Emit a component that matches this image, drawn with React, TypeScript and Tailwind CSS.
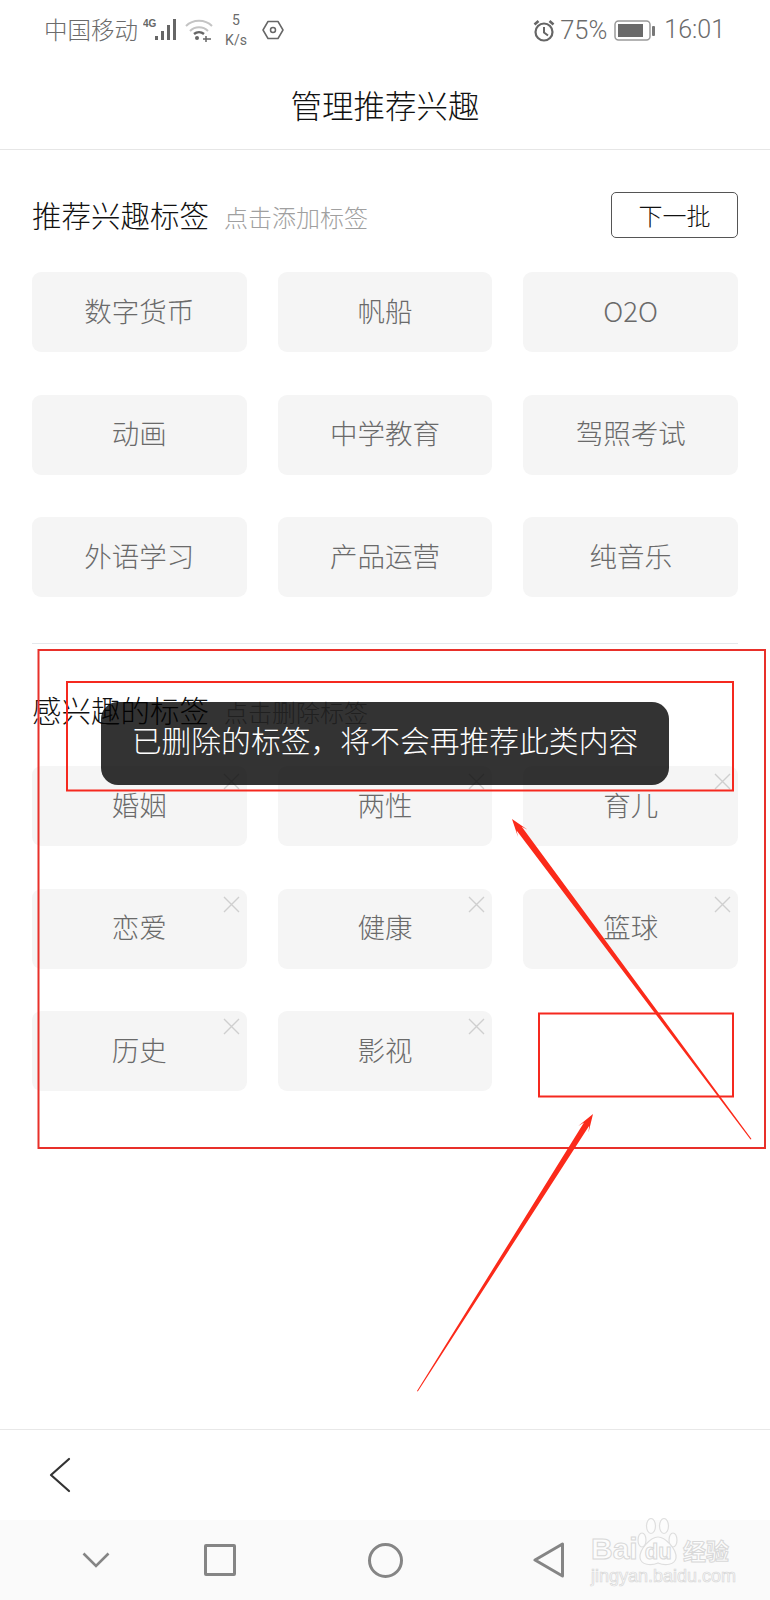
const font = '[font-family:"Noto_Sans_CJK_SC","Noto_Sans",sans-serif]';

function Tile({ label, removable }: { label: string; removable?: boolean }) {
  return (
    <div className="relative flex h-[80px] items-center justify-center rounded-[9px] bg-[#f5f5f5] pb-[3px] text-[27.500px] font-light text-[#6a6a6a]">
      {label}
      {removable && (
        <svg className="absolute right-[7px] top-[7px]" width="17" height="17" viewBox="0 0 17 17" fill="none" stroke="#cfcfcf" strokeWidth="1.4">
          <path d="M1 1l15 15M16 1L1 16" />
        </svg>
      )}
    </div>
  );
}

function SectionHead({ title, hint, action }: { title: string; hint: string; action?: boolean }) {
  return (
    <div className="flex h-[46px] items-center">
      <span className="pb-[2px] text-[29.500px] font-light text-[#111]">{title}</span>
      <span className="ml-[15px] mt-[3px] text-[24px] font-light text-[#a0a0a0]">{hint}</span>
      {action && (
        <div className="ml-auto flex h-[46px] w-[127px] items-center justify-center rounded-[5px] border border-[#555] text-[24px] font-light text-[#111]">
          下一批
        </div>
      )}
    </div>
  );
}

function StatusBar() {
  return (
    <div className="flex h-[60px] items-center pl-[44px] pr-[45px] text-[#6b6b6b]">
      <span className="text-[23.500px] font-light">中国移动</span>
      <svg className="ml-[5px] mb-[1px]" width="38" height="24" viewBox="0 0 38 24" fill="#666">
        <text x="0" y="9" fontSize="10" fontWeight="700" fontFamily="Liberation Sans">4G</text>
        <rect x="12" y="18" width="3" height="4" />
        <rect x="18" y="13" width="3" height="9" />
        <rect x="24" y="7" width="3" height="15" />
        <rect x="30" y="1" width="3" height="21" />
      </svg>
      <svg className="ml-[4px]" width="28" height="24" viewBox="0 0 28 24" fill="none">
        <path d="M1 8c7-7 19-7 26 0" stroke="#c4c4c4" strokeWidth="2" />
        <path d="M5 13c5-5 13-5 18 0" stroke="#c4c4c4" strokeWidth="2" />
        <path d="M9 16c3-2.500 7-2.500 10 0" stroke="#666" strokeWidth="2.400" />
        <circle cx="12" cy="20" r="2" fill="#666" />
        <path d="M18 21h8M21 18v6" stroke="#666" strokeWidth="1.500" />
      </svg>
      <div className="ml-[10px] flex w-[26px] flex-col items-center text-[14px] leading-[20px] [font-family:'Roboto',sans-serif]">
        <span>5</span>
        <span>K/s</span>
      </div>
      <svg className="ml-[13px]" width="22" height="20" viewBox="0 0 22 20" fill="none" stroke="#666" strokeWidth="1.500">
        <path d="M6 1.500h10l5 8.500-5 8.500H6L1 10z" strokeLinejoin="round" />
        <circle cx="11" cy="10" r="2.500" />
      </svg>
      <svg className="ml-auto" width="22" height="23" viewBox="0 0 22 23" fill="none" stroke="#666" strokeWidth="2.200">
        <circle cx="11" cy="13" r="8.500" />
        <path d="M11 8v5.500l4 3" strokeWidth="2" />
        <path d="M1.500 5.500L5.500 2M20.500 5.500L16.500 2" strokeWidth="2.600" />
      </svg>
      <span className="ml-[5px] text-[25.500px] font-light [font-family:'Roboto',sans-serif]">75%</span>
      <svg className="ml-[7px]" width="42" height="21" viewBox="0 0 42 21" fill="none">
        <rect x="1" y="1" width="35" height="19" rx="3.500" stroke="#9a9a9a" strokeWidth="1.500" />
        <rect x="4" y="4" width="25" height="13" fill="#6a6a6a" />
        <rect x="38" y="6" width="3" height="10" rx="1" fill="#777" />
      </svg>
      <span className="ml-[8px] text-[25px] font-light [font-family:'Roboto',sans-serif]">16:01</span>
    </div>
  );
}

function Watermark() {
  return (
    <div className="absolute left-[591px] top-[1517px] flex h-[68px] w-[138px] flex-col">
      <svg className="absolute left-[44px] top-0" width="46" height="50" viewBox="0 0 46 50" fill="#fcfcfc" stroke="#dedede" strokeWidth="1.200">
        <ellipse cx="7" cy="23" rx="4" ry="7" />
        <ellipse cx="16" cy="9" rx="4.500" ry="7.500" />
        <ellipse cx="29" cy="9" rx="4.500" ry="7.500" />
        <ellipse cx="38" cy="23" rx="4" ry="7" />
        <path d="M23 20c7 0 19 12 18 21-1 7-11 8-18 5-7 3-17 2-18-5-1-9 11-21 18-21z" />
      </svg>
      <div className="relative mt-[18px] flex h-[28px] w-full items-center text-[30px] font-bold leading-none text-[#fcfcfc] [-webkit-text-stroke:1px_#d8d8d8] [font-family:'Liberation_Sans',sans-serif]">
        <span>Bai</span>
        <span className="ml-[7px] mt-[5px] text-[22px]">du</span>
        <span className="ml-auto mt-[3px] text-[23px] [font-family:'Noto_Sans_CJK_SC',sans-serif]">经验</span>
      </div>
      <span className="relative mt-[4px] w-full text-[18px] leading-[18px] text-[#fafafa] [-webkit-text-stroke:0.7px_#d8d8d8] [font-family:'Liberation_Sans',sans-serif]">
        jingyan.baidu.com
      </span>
    </div>
  );
}

function Annotations() {
  return (
    <svg className="pointer-events-none absolute left-0 top-0" width="770" height="1600" viewBox="0 0 770 1600" fill="none">
      <rect x="38.500" y="650" width="726.500" height="498" stroke="#e8302a" strokeWidth="2" />
      <rect x="67" y="682" width="666" height="108.500" stroke="#f5291f" strokeWidth="2" />
      <rect x="539" y="1013.500" width="194" height="83" stroke="#f5291f" strokeWidth="2" />
      <polygon points="512,819 527.600,829.800 521.800,826.700 751.500,1139 750.500,1139.500 516.600,830.500 518,837" fill="#fb2a1a" />
      <polygon points="593,1114 588.500,1132.400 589.200,1125.700 417.800,1391.500 417,1391 584,1122.500 578.300,1126" fill="#fb2a1a" />
    </svg>
  );
}

export default function App() {
  return (
    <div className={`relative flex h-[1600px] w-[770px] flex-col overflow-hidden bg-white ${font}`}>
      <StatusBar />
      <div className="flex h-[90px] items-center justify-center border-b border-[#e6e6e6] text-[31.500px] font-light text-[#111]">
        管理推荐兴趣
      </div>
      <div className="px-[32px] pt-[42px]">
        <SectionHead title="推荐兴趣标签" hint="点击添加标签" action />
        <div className="mt-[34px] grid grid-cols-3 gap-x-[31px] gap-y-[42.500px]">
          {["数字货币", "帆船", "O2O", "动画", "中学教育", "驾照考试", "外语学习", "产品运营", "纯音乐"].map((t) => (
            <Tile key={t} label={t} />
          ))}
        </div>
        <div className="mt-[46px] h-px bg-[#e4e8ec]" />
        <div className="pt-[43px]">
          <SectionHead title="感兴趣的标签" hint="点击删除标签" />
        </div>
        <div className="mt-[33px] grid grid-cols-3 gap-x-[31px] gap-y-[42.500px]">
          {["婚姻", "两性", "育儿", "恋爱", "健康", "篮球", "历史", "影视"].map((t) => (
            <Tile key={t} label={t} removable />
          ))}
        </div>
      </div>
      <div className="mt-auto flex h-[91px] items-center border-t border-[#e8e8e8] pl-[49px]">
        <svg width="22" height="36" viewBox="0 0 22 36" fill="none" stroke="#333" strokeWidth="2.200" strokeLinecap="round" strokeLinejoin="round">
          <path d="M20 2L2 18l18 16" />
        </svg>
      </div>
      <div className="relative flex h-[80px] items-center bg-[#fafafa] pl-[82px]">
        <svg width="28" height="16" viewBox="0 0 28 16" fill="none" stroke="#858585" strokeWidth="2.600">
          <path d="M1.500 1.500L14 14 26.500 1.500" />
        </svg>
        <div className="ml-[94px] h-[32px] w-[32px] rounded-[2px] border-[3px] border-[#858585]" />
        <div className="ml-[132px] h-[35px] w-[35px] rounded-full border-[3px] border-[#858585]" />
        <svg className="ml-[130px]" width="32" height="36" viewBox="0 0 32 36" fill="none" stroke="#858585" strokeWidth="3" strokeLinejoin="round">
          <path d="M29.500 2v32L2 18z" />
        </svg>
      </div>
      <Watermark />
      <div className="absolute left-[101px] top-[702px] flex h-[83px] w-[568px] items-center justify-center rounded-[17px] bg-black/80 pb-[9px] text-[29.800px] font-light text-white">
        已删除的标签，将不会再推荐此类内容
      </div>
      <Annotations />
    </div>
  );
}
